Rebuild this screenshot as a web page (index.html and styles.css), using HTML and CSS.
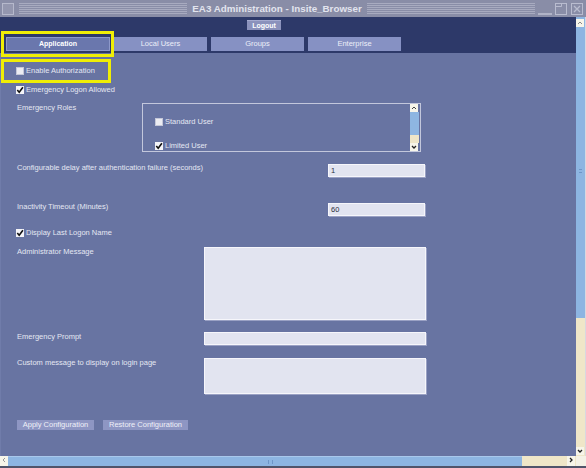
FILE: index.html
```html
<!DOCTYPE html>
<html>
<head>
<meta charset="utf-8">
<title>EA3 Administration - Insite_Browser</title>
<link rel="stylesheet" href="styles.css">
</head>
<body>
<div class="window">
  <div class="titlebar">
    <span class="sysicon"></span>
    <span class="stripes"></span>
    <span class="title">EA3 Administration - Insite_Browser</span>
    <span class="stripes"></span>
    <span class="wbtn min"></span>
    <span class="wbtn max"><svg width="12" height="12" viewBox="0 0 12 12"><rect x="0.5" y="0.5" width="11" height="11" fill="none" stroke="#b9bccf"/><path d="M0.5 3.5 H6.5 V0.5" fill="none" stroke="#b9bccf"/></svg></span>
    <span class="wbtn close"><svg width="12" height="12" viewBox="0 0 12 12"><rect x="0.5" y="0.5" width="11" height="11" fill="none" stroke="#b9bccf"/><path d="M3 3 L9 9 M9 3 L3 9" stroke="#b9bccf" stroke-width="1.3"/></svg></span>
  </div>

  <div class="main">
    <div class="viewport">
      <div class="header">
        <div class="logout-row"><span class="logout">Logout</span></div>
        <div class="tabs">
          <div class="tab active">Application</div>
          <div class="tab">Local Users</div>
          <div class="tab">Groups</div>
          <div class="tab">Enterprise</div>
        </div>
      </div>

      <div class="content">
        <div class="row r1 check">
          <span class="cb"></span><span>Enable Authorization</span>
        </div>
        <div class="row r2 check">
          <span class="cb on"><svg width="8" height="8" viewBox="0 0 8 8"><path d="M1.3 4 L3.2 6.2 L6.9 1.3" fill="none" stroke="#111" stroke-width="1.6"/></svg></span><span>Emergency Logon Allowed</span>
        </div>
        <div class="row r3">
          <span class="label w-list">Emergency Roles</span>
          <div class="listbox">
            <div class="items">
              <div class="check item"><span class="cb"></span><span>Standard User</span></div>
              <div class="check item"><span class="cb on"><svg width="8" height="8" viewBox="0 0 8 8"><path d="M1.3 4 L3.2 6.2 L6.9 1.3" fill="none" stroke="#111" stroke-width="1.6"/></svg></span><span>Limited User</span></div>
            </div>
            <div class="lscroll">
              <span class="arrow"><svg width="8" height="8" viewBox="0 0 8 8"><path d="M2 5 L4 3 L6 5" fill="none" stroke="#444" stroke-width="1"/></svg></span>
              <span class="lthumb"></span>
              <span class="ltrack"></span>
              <span class="arrow"><svg width="8" height="8" viewBox="0 0 8 8"><path d="M2 3 L4 5 L6 3" fill="none" stroke="#222" stroke-width="1.3"/></svg></span>
            </div>
          </div>
        </div>
        <div class="row r4">
          <span class="label w-narrow">Configurable delay after authentication failure (seconds)</span>
          <div class="field narrow">1</div>
        </div>
        <div class="row r5">
          <span class="label w-narrow">Inactivity Timeout (Minutes)</span>
          <div class="field narrow">60</div>
        </div>
        <div class="row r6 check">
          <span class="cb on"><svg width="8" height="8" viewBox="0 0 8 8"><path d="M1.3 4 L3.2 6.2 L6.9 1.3" fill="none" stroke="#111" stroke-width="1.6"/></svg></span><span>Display Last Logon Name</span>
        </div>
        <div class="row r7">
          <span class="label w-wide">Administrator Message</span>
          <div class="field wide tall"></div>
        </div>
        <div class="row r8">
          <span class="label w-wide">Emergency Prompt</span>
          <div class="field wide"></div>
        </div>
        <div class="row r9">
          <span class="label w-wide">Custom message to display on login page</span>
          <div class="field wide mid"></div>
        </div>
        <div class="row r10 buttons">
          <span class="btn apply">Apply Configuration</span>
          <span class="btn restore">Restore Configuration</span>
        </div>
      </div>
    </div>

    <div class="vscroll">
      <div class="vthumb">
        <span class="arrow"><svg width="8" height="8" viewBox="0 0 8 8"><path d="M2 5 L4 3 L6 5" fill="none" stroke="#888" stroke-width="1"/></svg></span>
        <span class="grip"></span>
      </div>
      <div class="vtrack">
        <span class="arrow"><svg width="8" height="8" viewBox="0 0 8 8"><path d="M2 3 L4 5 L6 3" fill="none" stroke="#222" stroke-width="1.3"/></svg></span>
      </div>
    </div>
  </div>

  <div class="hscroll">
    <span class="arrow"><svg width="8" height="8" viewBox="0 0 8 8"><path d="M5 2 L3 4 L5 6" fill="none" stroke="#999" stroke-width="1"/></svg></span>
    <div class="hthumb"><span class="hgrip"></span></div>
    <div class="htrack">
      <span class="arrow"><svg width="8" height="8" viewBox="0 0 8 8"><path d="M3 2 L5 4 L3 6" fill="none" stroke="#222" stroke-width="1.3"/></svg></span>
    </div>
    <span class="corner"></span>
  </div>
  <div class="bottomline"></div>

  <div class="mark mark-tab"></div>
  <div class="mark mark-auth"></div>
</div>
</body>
</html>
```

FILE: styles.css
```css
* { box-sizing: border-box; margin: 0; padding: 0; }
html, body { width: 586px; height: 468px; overflow: hidden; }
body {
  font-family: "Liberation Sans", Arial, sans-serif;
  font-size: 7.5px;
  line-height: 9px;
  color: #e4e7f2;
  background: #6874a2;
}
.window {
  position: relative;
  width: 586px;
  height: 468px;
  display: flex;
  flex-direction: column;
  background: #6874a2;
}

/* title bar */
.titlebar {
  height: 17px;
  flex: none;
  display: flex;
  align-items: center;
  background: #898da7;
  padding: 0 3px 0 2px;
}
.sysicon {
  width: 12px;
  height: 12px;
  flex: none;
  border: 1px solid #b6b9cc;
  background: #9497af;
}
.stripes {
  flex: 1;
  height: 11px;
  margin: 0 5px;
  background: repeating-linear-gradient(to bottom, #a8abc0 0, #a8abc0 1px, transparent 1px, transparent 2px);
}
.title {
  font-size: 9.8px;
  font-weight: bold;
  color: #e2e4ee;
  white-space: nowrap;
  line-height: 12px;
}
.wbtn { flex: none; display: block; height: 12px; }
.wbtn svg { display: block; }
.min { width: 14px; margin-left: -2px; border-bottom: 2px solid #b0b3c7; height: 12px; }
.max { width: 12px; margin-left: 3px; }
.close { width: 12px; margin-left: 4px; }

/* main */
.main { flex: 1; display: flex; min-height: 0; }
.viewport { flex: 1; display: flex; flex-direction: column; min-width: 0; }

.header {
  height: 36px;
  flex: none;
  background: #2d3969;
  padding-top: 3px;
}
.logout-row { display: flex; height: 10px; padding-left: 247px; }
.logout {
  width: 34px;
  height: 10px;
  background: #8b92bc;
  border-top: 1px solid #a5abd0;
  color: #ffffff;
  font-weight: bold;
  font-size: 7px;
  line-height: 9px;
  text-align: center;
}
.tabs {
  display: flex;
  gap: 4px;
  padding-left: 6px;
  margin-top: 7px;
  height: 14px;
}
.tab {
  width: 93px;
  height: 14px;
  background: #8691c3;
  color: #eceef8;
  text-align: center;
  line-height: 14px;
  font-size: 7.5px;
}
.tab.active {
  width: 104px;
  background: #6a77ad;
  border: 1px solid #8d98c9;
  line-height: 12px;
  color: #ffffff;
  font-weight: bold;
  font-size: 7px;
}

.content {
  flex: 1;
  display: flex;
  flex-direction: column;
  padding-left: 16px;
  border-left: 1px solid #707caa;
}
.row { display: flex; align-items: flex-start; flex: none; }
.check { display: flex; align-items: center; gap: 2px; height: 9px; }
.cb {
  width: 8px;
  height: 8px;
  flex: none;
  background: #ececf2;
  border: 1px solid #c4c7d8;
}
.cb.on { background: #f4f4f8; border: none; }
.cb svg { display: block; }

.r1 { margin-top: 13px; margin-left: -1px; }
.r2 { margin-top: 10px; margin-left: -1px; }
.r3 { margin-top: 9px; }
.r4 { margin-top: 11px; }
.r5 { margin-top: 25px; }
.r6 { margin-top: 12px; margin-left: -1px; }
.r7 { margin-top: 10px; }
.r8 { margin-top: 12px; }
.r9 { margin-top: 13px; }
.r10 { margin-top: 26px; }

.label { flex: none; white-space: nowrap; }
.w-list { width: 125px; }
.w-narrow { width: 311px; }
.w-wide { width: 187px; }

.listbox {
  width: 279px;
  height: 49px;
  border: 1px solid #c3c7dc;
  display: flex;
}
.items {
  flex: 1;
  padding: 13px 0 0 12px;
  display: flex;
  flex-direction: column;
  gap: 15px;
}
.lscroll {
  width: 9px;
  margin-right: 1px;
  display: flex;
  flex-direction: column;
}
.arrow {
  display: block;
  width: 8px;
  height: 8px;
  background: #f7f5ea;
  flex: none;
}
.arrow svg { display: block; }
.lthumb { height: 23px; background: #8eb6e2; }
.ltrack { flex: 1; background: #efe6c8; }

.field {
  height: 13px;
  background: #e2e4f0;
  border: 1px solid #f6f6fb;
  box-shadow: 1px 1px 0 #9aa1c4;
  color: #2a2d3c;
  padding-left: 2px;
  line-height: 11px;
  font-size: 7.5px;
}
.narrow { width: 97px; margin-top: 1px; }
.wide { width: 222px; }
.tall { height: 73px; }
.mid { height: 36px; }

.buttons { gap: 9px; }
.btn {
  height: 10px;
  background: #8e96c3;
  color: #eef0f8;
  text-align: center;
  line-height: 10px;
  white-space: nowrap;
}
.apply { width: 77px; }
.restore { width: 85px; }

/* vertical scrollbar */
.vscroll {
  width: 10px;
  flex: none;
  display: flex;
  flex-direction: column;
  background: #efe6c8;
  border-right: 1px solid #d8d8e0;
}
.vthumb {
  height: 301px;
  background: #8db5e2;
  padding-top: 2px;
  display: flex;
  flex-direction: column;
  align-items: flex-start;
}
.grip {
  display: block;
  width: 3px;
  height: 4px;
  margin: 142px 0 0 3px;
  border-top: 1px solid #6e96c8;
  border-bottom: 1px solid #6e96c8;
}
.vtrack {
  flex: 1;
  display: flex;
  flex-direction: column;
  justify-content: flex-end;
  padding-bottom: 1px;
}

/* horizontal scrollbar */
.hscroll {
  height: 10px;
  flex: none;
  display: flex;
  background: #efe6c8;
}
.hscroll .arrow { height: 10px; }
.hthumb {
  width: 514px;
  background: #8db5e2;
  border-top: 1px solid #a9c8ec;
  display: flex;
  justify-content: center;
  align-items: center;
}
.hgrip {
  display: block;
  width: 5px;
  height: 4px;
  margin-left: 10px;
  border-left: 1px solid #6e96c8;
  border-right: 1px solid #6e96c8;
}
.htrack {
  flex: 1;
  display: flex;
  justify-content: flex-end;
  padding-right: 1px;
}
.corner { width: 10px; flex: none; background: #f4f1e6; }
.bottomline { height: 2px; flex: none; background: #50546a; }

/* yellow annotation boxes over the screenshot */
.mark {
  position: absolute;
  border: 3px solid #f0ee05;
}
.mark-tab { left: 1px; top: 31px; width: 113px; height: 26px; }
.mark-auth { left: 1px; top: 59px; width: 110px; height: 24px; }
```
